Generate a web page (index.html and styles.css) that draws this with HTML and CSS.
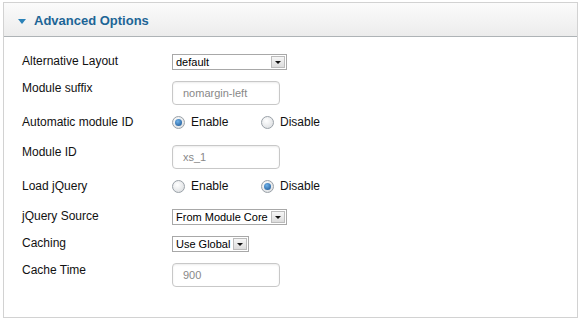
FILE: index.html
```html
<!doctype html>
<html lang="en">
<head>
	<meta charset="UTF-8" />
	<title>Advanced Options</title>
	<link rel="stylesheet" href="styles.css">
</head>
<body>
	<section class="panel">
		<h3 class="panel-head"><span class="toggle"></span>Advanced Options</h3>
		<div class="panel-body">
			<div class="row row-select">
				<label>Alternative Layout</label>
				<div class="select wide"><span>default</span><i class="arrow"></i></div>
			</div>
			<div class="row row-input">
				<label>Module suffix</label>
				<div class="text">nomargin-left</div>
			</div>
			<div class="row row-radio">
				<label>Automatic module ID</label>
				<div class="radios">
					<span class="radio checked"></span><span class="opt">Enable</span>
					<span class="radio"></span><span class="opt">Disable</span>
				</div>
			</div>
			<div class="row row-input">
				<label>Module ID</label>
				<div class="text">xs_1</div>
			</div>
			<div class="row row-radio">
				<label>Load jQuery</label>
				<div class="radios">
					<span class="radio"></span><span class="opt">Enable</span>
					<span class="radio checked"></span><span class="opt">Disable</span>
				</div>
			</div>
			<div class="row row-select">
				<label>jQuery Source</label>
				<div class="select"><span>From Module Core</span><i class="arrow"></i></div>
			</div>
			<div class="row row-select">
				<label>Caching</label>
				<div class="select"><span>Use Global</span><i class="arrow"></i></div>
			</div>
			<div class="row row-input">
				<label>Cache Time</label>
				<div class="text">900</div>
			</div>
		</div>
	</section>
</body>
</html>
```
FILE: styles.css
```css
* {
	margin: 0;
	padding: 0;
	box-sizing: border-box;
}

body {
	background: #fff;
	font-family: "Liberation Sans", Arial, sans-serif;
	font-size: 12px;
	color: #222;
	padding: 2px 3px;
}

.panel {
	width: 575px;
	height: 316px;
	border: 1px solid #d2d2d2;
	background: #fff;
}

.panel-head {
	height: 34px;
	background: linear-gradient(#fbfbfb, #ececec);
	border-bottom: 1px solid #aeb3b6;
	display: flex;
	align-items: center;
	padding: 2px 0 0 14px;
	font-size: 13px;
	font-weight: bold;
	color: #1d6596;
}

.toggle {
	width: 0;
	height: 0;
	border-left: 4px solid transparent;
	border-right: 4px solid transparent;
	border-top: 5px solid #2a82b8;
	margin: 1px 8px 0 0;
}

.panel-body {
	padding: 16px 0 0 18px;
}

.row {
	display: flex;
	align-items: flex-start;
}

.row label {
	width: 150px;
	line-height: 16px;
	color: #111;
}

.row-select {
	height: 27px;
}

.row-input {
	height: 34px;
}

.row-radio {
	height: 30px;
}

.select {
	display: flex;
	align-items: center;
	height: 16px;
	margin-top: 1px;
	border: 1px solid #a8a8a8;
	background: #fff;
	font-size: 11px;
	color: #000;
	padding-left: 3px;
}

.select span {
	padding-right: 3px;
}

.select.wide {
	width: 115px;
	justify-content: space-between;
}

.arrow {
	width: 14px;
	height: 12px;
	margin-right: 1px;
	border: 1px solid #bcbcbc;
	background: linear-gradient(#f6f6f6, #dcdcdc);
	position: relative;
}

.arrow::after {
	content: "";
	position: absolute;
	left: 3px;
	top: 4px;
	border-left: 3px solid transparent;
	border-right: 3px solid transparent;
	border-top: 3px solid #111;
}

.text {
	width: 108px;
	height: 24px;
	margin-top: 1px;
	border: 1px solid #c8c8c8;
	border-radius: 4px;
	box-shadow: inset 0 1px 2px rgba(0, 0, 0, .08);
	font-size: 11px;
	line-height: 22px;
	padding-left: 10px;
	color: #888;
}

.radios {
	display: flex;
	align-items: center;
	height: 16px;
	font-size: 12px;
	color: #111;
}

.radio {
	width: 13px;
	height: 13px;
	border-radius: 50%;
	border: 1px solid #9aa1a8;
	background: radial-gradient(circle at 40% 35%, #fff, #d6d9dc);
	display: flex;
	align-items: center;
	justify-content: center;
}

.radio.checked::after {
	content: "";
	width: 7px;
	height: 7px;
	border-radius: 50%;
	background: radial-gradient(circle at 40% 35%, #6fb2ea, #17508e);
}

.opt {
	margin-left: 6px;
	width: 70px;
}
```
